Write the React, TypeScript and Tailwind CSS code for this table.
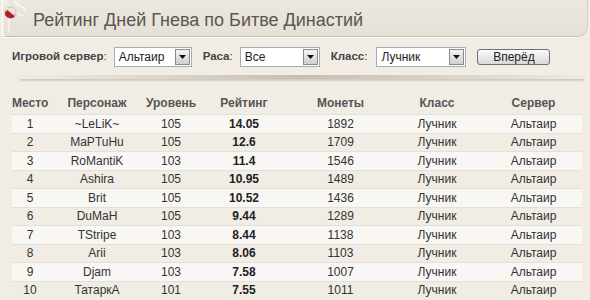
import React from "react";

const rows = [
  ["1", "~LeLiK~", "105", "14.05", "1892"],
  ["2", "MaPTuHu", "105", "12.6", "1709"],
  ["3", "RoMantiK", "103", "11.4", "1546"],
  ["4", "Ashira", "105", "10.95", "1489"],
  ["5", "Brit", "105", "10.52", "1436"],
  ["6", "DuMaH", "105", "9.44", "1289"],
  ["7", "TStripe", "103", "8.44", "1138"],
  ["8", "Arii", "103", "8.06", "1103"],
  ["9", "Djam", "103", "7.58", "1007"],
  ["10", "ТатаркA", "101", "7.55", "1011"],
];

function Select({ value, width }: { value: string; width: string }) {
  return (
    <div
      className={`${width} h-[20px] bg-white border border-[#a5acb5] flex items-center justify-between pl-[4px] pr-[1px]`}
    >
      <span className="text-[12px] text-[#222] leading-none">{value}</span>
      <div className="w-[15px] h-[16px] border border-[#8a8a8a] bg-gradient-to-b from-[#f4f4f4] to-[#cfcfcf] flex items-center justify-center">
        <svg width="7" height="4" viewBox="0 0 7 4">
          <path d="M0 0 H7 L3.5 4 Z" fill="#111" />
        </svg>
      </div>
    </div>
  );
}

export default function App() {
  return (
    <div
      className="w-[590px] h-[300px] overflow-hidden bg-[#f1ede5] relative"
      style={{ fontFamily: '"Liberation Sans", Arial, sans-serif' }}
    >
      {/* Banner */}
      <div className="relative h-[37px] ml-[2px] mr-[2px] bg-gradient-to-b from-[#ece8e0] to-[#e6e1d7] border-b border-[#c7bfb1] border-r border-r-[#d6cfc2] rounded-br-[10px] flex items-center pl-[31px] shadow-[0_1px_0_#faf8f4]">
        <span className="text-[18px] text-[#5a5650] leading-none mt-[3px]">
          Рейтинг Дней Гнева по Битве Династий
        </span>
        <svg
          className="absolute left-[-2px] top-0"
          width="30"
          height="37"
          viewBox="0 0 30 37"
        >
          <path d="M2.5 0 V34 Q2.5 36 5 36" stroke="#fbfaf7" strokeWidth="1.5" fill="none" />
          <path d="M9 19 V33" stroke="#fbfaf7" strokeWidth="1" fill="none" />
          <path d="M6 0 V6" stroke="#fbfaf7" strokeWidth="1" fill="none" />
          <path d="M14 0 Q16 5 22 7 Q25 8 25 12" stroke="#fbfaf7" strokeWidth="1.3" fill="none" />
          <path d="M17 13 Q20 16 24 15" stroke="#fbfaf7" strokeWidth="1.2" fill="none" />
          <circle cx="10.5" cy="12.5" r="5.5" fill="#efe4de" stroke="#c9b2aa" strokeWidth="0.8" />
          <path d="M5 12.5 A5.5 5.5 0 0 0 15.5 15 L8 9 Z" fill="#b01f28" />
          <path d="M6 8 L15 15.5" stroke="#f6efe9" strokeWidth="1.3" />
        </svg>
      </div>

      {/* Filters */}
      <div className="mt-[10px] flex items-center h-[20px] pl-[12px] text-[11.5px] text-[#333]">
        <span>
          <b className="text-[#444]">Игровой сервер</b>:
        </span>
        <div className="ml-[7px]">
          <Select value="Альтаир" width="w-[78px]" />
        </div>
        <span className="ml-[11px]">
          <b className="text-[#444]">Раса</b>:
        </span>
        <div className="ml-[7px]">
          <Select value="Все" width="w-[80px]" />
        </div>
        <span className="ml-[11px]">
          <b className="text-[#444]">Класс</b>:
        </span>
        <div className="ml-[9px]">
          <Select value="Лучник" width="w-[90px]" />
        </div>
        <button className="ml-[11px] w-[73px] h-[16px] rounded-[3px] border border-[#6f6f6f] bg-gradient-to-b from-[#fbfbfb] to-[#d8d8d8] text-[12px] text-[#222] leading-none flex items-center justify-center">
          Вперёд
        </button>
      </div>

      {/* Separator */}
      <div className="mt-[8px] ml-[20px] mr-[6px] h-[4px] bg-gradient-to-r from-[#f1ede5] via-[#c7beb0] to-[#efe9df] shadow-[0_2px_2px_rgba(150,140,120,0.35)]" />

      {/* Table */}
      <table className="mt-[13px] ml-[12px] w-[570px] table-fixed border-collapse text-[12px]">
        <colgroup>
          <col className="w-[36px]" />
          <col className="w-[98px]" />
          <col className="w-[50px]" />
          <col className="w-[96px]" />
          <col className="w-[97px]" />
          <col className="w-[96px]" />
          <col className="w-[97px]" />
        </colgroup>
        <thead>
          <tr className="h-[22px] text-[#555] font-bold">
            <th className="text-center font-bold p-0">Место</th>
            <th className="text-center font-bold p-0">Персонаж</th>
            <th className="text-center font-bold p-0">Уровень</th>
            <th className="text-center font-bold p-0">Рейтинг</th>
            <th className="text-center font-bold p-0">Монеты</th>
            <th className="text-center font-bold p-0">Класс</th>
            <th className="text-center font-bold p-0">Сервер</th>
          </tr>
        </thead>
        <tbody>
          {rows.map((r, i) => (
            <tr
              key={i}
              className={
                i % 2 === 0
                  ? "h-[19px] bg-[#f8f7f4] border-t border-[#e4e0d8] text-[#333]"
                  : "h-[18px] border-t border-[#e4e0d8] text-[#333]"
              }
            >
              <td className="text-center p-0 leading-[16px]">{r[0]}</td>
              <td className="text-center p-0 leading-[16px]">{r[1]}</td>
              <td className="text-center p-0 leading-[16px]">{r[2]}</td>
              <td className="text-center p-0 leading-[16px] font-bold text-[#222]">{r[3]}</td>
              <td className="text-center p-0 leading-[16px]">{r[4]}</td>
              <td className="text-center p-0 leading-[16px]">Лучник</td>
              <td className="text-center p-0 leading-[16px]">Альтаир</td>
            </tr>
          ))}
        </tbody>
      </table>
    </div>
  );
}
